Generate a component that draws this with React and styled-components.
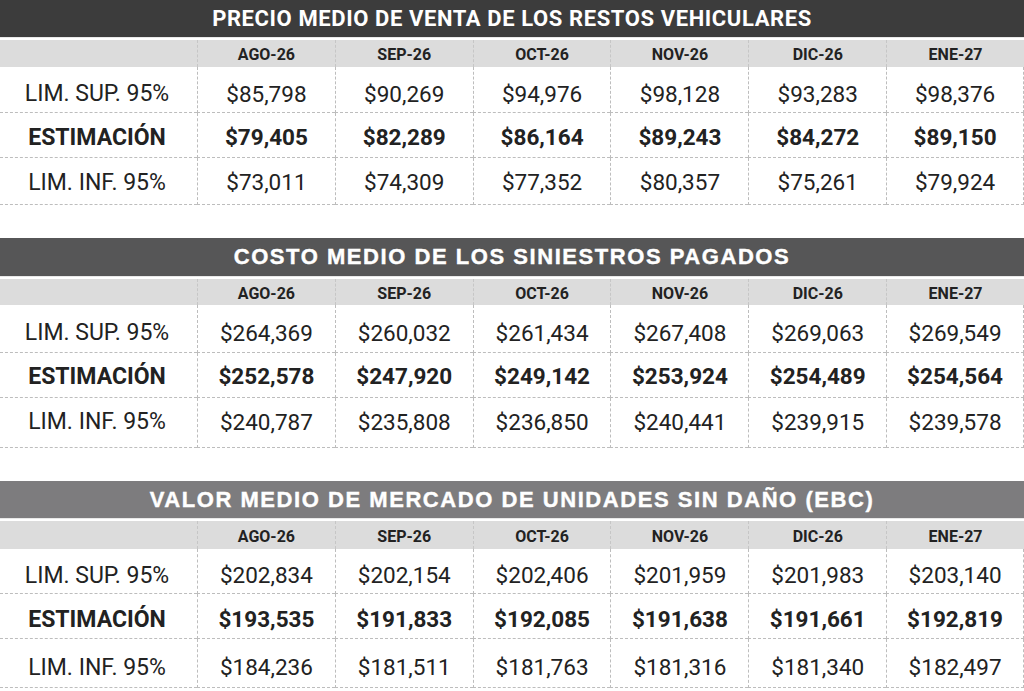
import React from 'react';
import styled, { createGlobalStyle } from 'styled-components';

const GlobalStyle = createGlobalStyle`
  html, body {
    margin: 0;
    padding: 0;
    background: #fff;
  }
  body {
    font-family: Roboto, "Liberation Sans", Arial, sans-serif;
    color: #222;
  }
`;

const meses = ['AGO-26', 'SEP-26', 'OCT-26', 'NOV-26', 'DIC-26', 'ENE-27'];

// alto: height of each row, ajuste: how far the text sits below the row centre
const tablas = [
  {
    titulo: 'PRECIO MEDIO DE VENTA DE LOS RESTOS VEHICULARES',
    color: '#3c3c3c',
    ancha: false,
    altoTitulo: 37,
    altoCabecera: 27,
    filas: [
      ['LIM. SUP. 95%', 46, 4, ['$85,798', '$90,269', '$94,976', '$98,128', '$93,283', '$98,376']],
      ['ESTIMACIÓN', 45, 2, ['$79,405', '$82,289', '$86,164', '$89,243', '$84,272', '$89,150']],
      ['LIM. INF. 95%', 47, 1, ['$73,011', '$74,309', '$77,352', '$80,357', '$75,261', '$79,924']],
    ],
  },
  {
    titulo: 'COSTO MEDIO DE LOS SINIESTROS PAGADOS',
    color: '#565657',
    ancha: true,
    altoTitulo: 38,
    altoCabecera: 26,
    filas: [
      ['LIM. SUP. 95%', 48, 4, ['$264,369', '$260,032', '$261,434', '$267,408', '$269,063', '$269,549']],
      ['ESTIMACIÓN', 45, 1, ['$252,578', '$247,920', '$249,142', '$253,924', '$254,489', '$254,564']],
      ['LIM. INF. 95%', 50, -1, ['$240,787', '$235,808', '$236,850', '$240,441', '$239,915', '$239,578']],
    ],
  },
  {
    titulo: 'VALOR MEDIO DE MERCADO DE UNIDADES SIN DAÑO (EBC)',
    color: '#7d7c7e',
    ancha: true,
    altoTitulo: 37,
    altoCabecera: 28,
    filas: [
      ['LIM. SUP. 95%', 45, 4, ['$202,834', '$202,154', '$202,406', '$201,959', '$201,983', '$203,140']],
      ['ESTIMACIÓN', 45, 3, ['$193,535', '$191,833', '$192,085', '$191,638', '$191,661', '$192,819']],
      ['LIM. INF. 95%', 49, 4, ['$184,236', '$181,511', '$181,763', '$181,316', '$181,340', '$182,497']],
    ],
  },
];

const Page = styled.div`
  width: 1024px;
  display: flex;
  flex-direction: column;
  gap: 33px;
`;

const Section = styled.section`
  display: flex;
  flex-direction: column;
`;

const Title = styled.div`
  height: ${(p) => p.$alto}px;
  background: ${(p) => p.$color};
  color: #fff;
  font-family: ${(p) => (p.$ancha ? '"Liberation Sans", Arial' : 'Roboto, "Liberation Sans"')}, sans-serif;
  font-weight: 700;
  font-size: 22px;
  letter-spacing: ${(p) => (p.$ancha ? 1.55 : 0.6)}px;
  -webkit-text-stroke: ${(p) => (p.$ancha ? '0.4px #fff' : '0')};
  display: flex;
  align-items: center;
  justify-content: center;
  margin-bottom: 2px;
  border-bottom: 1px solid #e8e8e8;
`;

const Grid = styled.div`
  display: grid;
  grid-template-columns: 197px repeat(6, 1fr);
`;

const HeadCell = styled.div`
  height: ${(p) => p.$alto}px;
  background: #dcdcdc;
  font-weight: 700;
  font-size: 16px;
  color: #222;
  display: flex;
  align-items: center;
  justify-content: center;
  padding-top: 2px;
  box-sizing: border-box;
  border-left: ${(p) => (p.$first ? 'none' : '1px dashed #c6c6c6')};
`;

const Cell = styled.div`
  height: ${(p) => p.$alto}px;
  display: flex;
  align-items: center;
  justify-content: center;
  box-sizing: border-box;
  padding-top: ${(p) => Math.max(0, p.$ajuste * 2)}px;
  padding-bottom: ${(p) => Math.max(0, -p.$ajuste * 2)}px;
  font-size: 22.5px;
  font-weight: ${(p) => (p.$bold ? 700 : 400)};
  color: #222;
  border-bottom: 1px dashed #bdbdbd;
  border-left: ${(p) => (p.$first ? 'none' : '1px dashed #bdbdbd')};
  border-right: ${(p) => (p.$last ? '1px dashed #bdbdbd' : 'none')};
`;

const Label = styled(Cell)`
  font-size: 23px;
  padding-right: 3px;
`;

const Tabla = ({ titulo, color, ancha, altoTitulo, altoCabecera, filas }) => (
  <Section>
    <Title $color={color} $ancha={ancha} $alto={altoTitulo}>{titulo}</Title>
    <Grid>
      <HeadCell $first $alto={altoCabecera} />
      {meses.map((m) => (
        <HeadCell key={m} $alto={altoCabecera}>{m}</HeadCell>
      ))}
      {filas.map(([etiqueta, alto, ajuste, valores]) => {
        const bold = etiqueta === 'ESTIMACIÓN';
        return (
          <React.Fragment key={etiqueta}>
            <Label $first $bold={bold} $alto={alto} $ajuste={ajuste}>{etiqueta}</Label>
            {valores.map((v, i) => (
              <Cell
                key={i}
                $bold={bold}
                $alto={alto}
                $ajuste={ajuste}
                $last={i === valores.length - 1}
              >
                {v}
              </Cell>
            ))}
          </React.Fragment>
        );
      })}
    </Grid>
  </Section>
);

export default function App() {
  return (
    <>
      <GlobalStyle />
      <Page>
        {tablas.map((t) => (
          <Tabla key={t.titulo} {...t} />
        ))}
      </Page>
    </>
  );
}
